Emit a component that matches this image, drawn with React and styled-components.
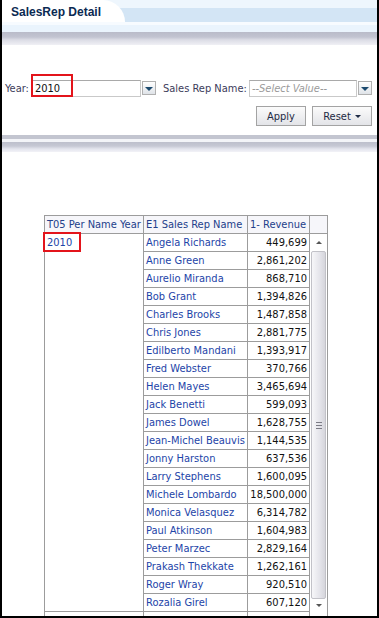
import styled, { createGlobalStyle } from "styled-components";

const GlobalStyle = createGlobalStyle`
    html, body {
        margin: 0;
        padding: 0;
        background: #ffffff;
    }
`;

const Frame = styled.div`
    box-sizing: border-box;
    width: 379px;
    height: 618px;
    border-left: 2px solid #000;
    border-right: 2px solid #000;
    border-bottom: 2px solid #000;
    overflow: hidden;
    font-family: "DejaVu Sans Condensed", "DejaVu Sans", sans-serif;
    font-size: 11px;
    color: #333;
`;

const TabBar = styled.div`
    display: flex;
    height: 22px;
    background: linear-gradient(#eef6fd 0, #eef6fd 8px, #d3e5f5 8px, #d3e5f5 22px);
`;

const Tab = styled.div`
    width: 123px;
    background: #fff;
    border-top-right-radius: 22px 22px;
    padding-left: 9px;
    box-sizing: border-box;
    display: flex;
    align-items: center;
    padding-top: 2px;
    font-family: "Liberation Sans", Arial, sans-serif;
    font-weight: bold;
    font-size: 12px;
    color: #0b2a52;
`;

const Band = styled.div`
    height: ${(p) => p.$h}px;
    background: ${(p) => p.$bg};
`;

const Prompts = styled.div`
    display: flex;
    align-items: center;
    padding: 34px 0 0 3px;
    height: 18px;
`;

const Label = styled.span`
    color: #3c3c5a;
    margin-right: ${(p) => p.$mr || 3}px;
    margin-left: ${(p) => p.$ml || 0}px;
`;

const Field = styled.div`
    position: relative;
    display: flex;
    align-items: center;
`;

const Input = styled.div`
    box-sizing: border-box;
    width: ${(p) => p.$w}px;
    height: 17px;
    border: 1px solid #c9c9c9;
    border-top-color: #a9a9a9;
    padding: 1px 2px 0;
    color: ${(p) => (p.$placeholder ? "#9a9a9a" : "#111")};
    font-style: ${(p) => (p.$placeholder ? "italic" : "normal")};
    line-height: 14px;
    white-space: nowrap;
    overflow: hidden;
`;

const DropBtn = styled.div`
    box-sizing: border-box;
    width: 14px;
    height: 14px;
    margin-left: 1px;
    border: 1px solid #b0b0b0;
    background: linear-gradient(#ffffff, #dfe3e8);
    display: flex;
    align-items: center;
    justify-content: center;
    &::after {
        content: "";
        border-left: 4px solid transparent;
        border-right: 4px solid transparent;
        border-top: 4px solid #1c4a6e;
        margin-top: 1px;
    }
`;

const Highlight = styled.div`
    position: absolute;
    left: ${(p) => p.$x}px;
    top: ${(p) => p.$y}px;
    width: ${(p) => p.$w}px;
    height: ${(p) => p.$h}px;
    border: 2px solid #e3141b;
    box-sizing: border-box;
    pointer-events: none;
`;

const Buttons = styled.div`
    display: flex;
    justify-content: flex-end;
    gap: 6px;
    padding: 9px 5px 0 0;
`;

const Button = styled.div`
    box-sizing: border-box;
    width: ${(p) => p.$w}px;
    height: 20px;
    border: 1px solid #a3a3a3;
    background: linear-gradient(#fbfbfb, #e3e4e8);
    display: flex;
    align-items: center;
    justify-content: center;
    gap: 4px;
    color: #1d2a44;
    font-size: 11px;
`;

const Caret = styled.span`
    border-left: 3px solid transparent;
    border-right: 3px solid transparent;
    border-top: 3px solid #1d2a44;
    margin-top: 1px;
`;

const Separator = styled.div`
    margin-top: 9px;
    height: 17px;
    background: linear-gradient(
        #c3c5d0 0, #c3c5d0 4px,
        #f3f4f8 4px, #f3f4f8 7px,
        #bdbfcc 7px, #c6c8d4 11px,
        #e4e5ee 14px, #f2f2f7 17px
    );
`;

const TableWrap = styled.div`
    padding: 63px 0 0 42px;
`;

const Grid = styled.table`
    border-collapse: collapse;
    table-layout: fixed;
    width: 283px;
    font-size: 11px;
`;

const Th = styled.th`
    height: 17px;
    padding: 0 2px;
    border: 1px solid #9c9c9c;
    background: #f6f6fa;
    color: #23408a;
    font-weight: normal;
    text-align: left;
    white-space: nowrap;
    overflow: hidden;
`;

const Td = styled.td`
    height: 17px;
    padding: 0 2px;
    border: 1px solid #9c9c9c;
    white-space: nowrap;
    overflow: hidden;
    vertical-align: ${(p) => (p.$top ? "top" : "middle")};
    text-align: ${(p) => (p.$num ? "right" : "left")};
    color: ${(p) => (p.$num ? "#111" : "#1d44a8")};
    line-height: 16px;
`;

const YearCell = styled(Td)`
    position: relative;
    overflow: visible;
    padding-top: 1px;
`;

const ScrollCell = styled.td`
    border: 1px solid #9c9c9c;
    padding: 0;
    vertical-align: top;
`;

const Scrollbar = styled.div`
    display: flex;
    flex-direction: column;
    align-items: center;
    height: 378px;
    padding: 0 1px;
`;

const Arrow = styled.div`
    height: ${(p) => p.$h}px;
    width: 14px;
    display: flex;
    align-items: center;
    justify-content: center;
    &::after {
        content: "";
        border-left: 3px solid transparent;
        border-right: 3px solid transparent;
        ${(p) => (p.$up ? "border-bottom: 3px solid #555;" : "border-top: 3px solid #555;")}
    }
`;

const Thumb = styled.div`
    box-sizing: border-box;
    flex: 1;
    width: 15px;
    border: 1px solid #c2c2c8;
    border-radius: 2px;
    background: linear-gradient(90deg, #f7f7f9, #e4e4ea 60%, #d6d6dc);
    display: flex;
    align-items: center;
    justify-content: center;
`;

const Grip = styled.div`
    width: 6px;
    height: 7px;
    background: repeating-linear-gradient(#7b7b85 0, #7b7b85 1px, transparent 1px, transparent 3px);
`;

const rows = [
    ["Angela Richards", "449,699"],
    ["Anne Green", "2,861,202"],
    ["Aurelio Miranda", "868,710"],
    ["Bob Grant", "1,394,826"],
    ["Charles Brooks", "1,487,858"],
    ["Chris Jones", "2,881,775"],
    ["Edilberto Mandani", "1,393,917"],
    ["Fred Webster", "370,766"],
    ["Helen Mayes", "3,465,694"],
    ["Jack Benetti", "599,093"],
    ["James Dowel", "1,628,755"],
    ["Jean-Michel Beauvis", "1,144,535"],
    ["Jonny Harston", "637,536"],
    ["Larry Stephens", "1,600,095"],
    ["Michele Lombardo", "18,500,000"],
    ["Monica Velasquez", "6,314,782"],
    ["Paul Atkinson", "1,604,983"],
    ["Peter Marzec", "2,829,164"],
    ["Prakash Thekkate", "1,262,161"],
    ["Roger Wray", "920,510"],
    ["Rozalia Girel", "607,120"],
    ["", ""],
];

export default function App() {
    return (
        <>
            <GlobalStyle />
            <Frame>
                <TabBar>
                    <Tab>SalesRep Detail</Tab>
                </TabBar>
                <Band $h={23} $bg="linear-gradient(#f7fbff 0, #f7fbff 3px, #eaf4fd 3px, #eaf4fd 10px, #b9bbc9 10px, #c2c4d1 15px, #dcdde6 18px, #f0f0f5 23px)" />

                <Prompts>
                    <Label>Year:</Label>
                    <Field>
                        <Input $w={109}>2010</Input>
                        <DropBtn />
                        <Highlight $x={-1} $y={-6} $w={42} $h={23} />
                    </Field>
                    <Label $ml={7} $mr={2}>Sales Rep Name:</Label>
                    <Field>
                        <Input $w={108} $placeholder>--Select Value--</Input>
                        <DropBtn />
                    </Field>
                </Prompts>

                <Buttons>
                    <Button $w={50}>Apply</Button>
                    <Button $w={60}>Reset <Caret /></Button>
                </Buttons>

                <Separator />

                <TableWrap>
                    <Grid>
                        <colgroup>
                            <col style={{ width: 99 }} />
                            <col style={{ width: 104 }} />
                            <col style={{ width: 62 }} />
                            <col style={{ width: 18 }} />
                        </colgroup>
                        <thead>
                            <tr>
                                <Th>T05 Per Name Year</Th>
                                <Th>E1 Sales Rep Name</Th>
                                <Th>1- Revenue</Th>
                                <Th />
                            </tr>
                        </thead>
                        <tbody>
                            {rows.map(([name, rev], i) => (
                                <tr key={i}>
                                    {i === 0 && (
                                        <YearCell rowSpan={21} $top>
                                            2010
                                            <Highlight $x={-2} $y={-2} $w={38} $h={20} />
                                        </YearCell>
                                    )}
                                    {i === 21 && <Td />}
                                    <Td>{name}</Td>
                                    <Td $num>{rev}</Td>
                                    {i === 0 && (
                                        <ScrollCell rowSpan={22}>
                                            <Scrollbar>
                                                <Arrow $up $h={17} />
                                                <Thumb>
                                                    <Grip />
                                                </Thumb>
                                                <Arrow $h={13} />
                                            </Scrollbar>
                                        </ScrollCell>
                                    )}
                                </tr>
                            ))}
                        </tbody>
                    </Grid>
                </TableWrap>
            </Frame>
        </>
    );
}
